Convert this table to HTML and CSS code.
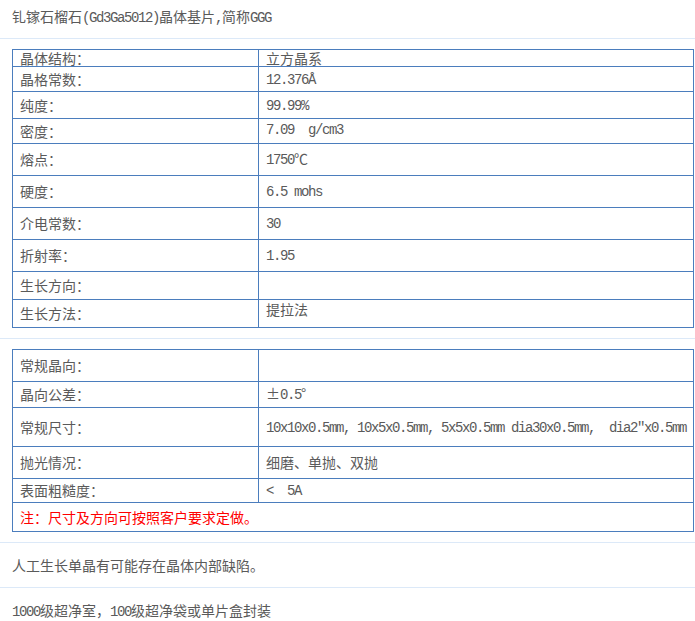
FILE: index.html
```html
<!DOCTYPE html>
<html lang="zh-CN">
<head>
<meta charset="utf-8">
<title>钆镓石榴石晶体基片</title>
<link rel="stylesheet" href="styles.css">
</head>
<body>
<div class="block title">钆镓石榴石<span class="en">(Gd3Ga5012)</span>晶体基片<span class="en">,</span>简称<span class="en">GGG</span></div>

<div class="block table-wrap">
  <table class="spec">
    <tr class="h17"><td class="k">晶体结构：</td><td class="v">立方晶系</td></tr>
    <tr class="h25"><td class="k">晶格常数：</td><td class="v"><span class="en">12.376Å</span></td></tr>
    <tr class="h27"><td class="k">纯度：</td><td class="v"><span class="en">99.99%</span></td></tr>
    <tr class="h25"><td class="k">密度：</td><td class="v top"><span class="en">7.09  g/cm3</span></td></tr>
    <tr class="h32"><td class="k">熔点：</td><td class="v"><span class="en">1750</span>℃</td></tr>
    <tr class="h32"><td class="k">硬度：</td><td class="v"><span class="en">6.5 mohs</span></td></tr>
    <tr class="h32"><td class="k">介电常数：</td><td class="v"><span class="en">30</span></td></tr>
    <tr class="h32"><td class="k">折射率：</td><td class="v"><span class="en">1.95</span></td></tr>
    <tr class="h28"><td class="k">生长方向：</td><td class="v"></td></tr>
    <tr class="h28"><td class="k">生长方法：</td><td class="v top">提拉法</td></tr>
  </table>
</div>

<div class="block table-wrap">
  <table class="spec">
    <tr class="h32"><td class="k">常规晶向：</td><td class="v"></td></tr>
    <tr class="h26"><td class="k">晶向公差：</td><td class="v">±<span class="en">0.5</span>°</td></tr>
    <tr class="h39"><td class="k">常规尺寸：</td><td class="v"><span class="en">10x10x0.5mm, 10x5x0.5mm, 5x5x0.5mm dia30x0.5mm,  dia2″x0.5mm</span></td></tr>
    <tr class="h32"><td class="k">抛光情况：</td><td class="v">细磨、单抛、双抛</td></tr>
    <tr class="h24"><td class="k">表面粗糙度：</td><td class="v"><span class="en">&lt;  5A</span></td></tr>
    <tr class="h29"><td class="note" colspan="2">注：尺寸及方向可按照客户要求定做。</td></tr>
  </table>
</div>

<div class="block line">人工生长单晶有可能存在晶体内部缺陷。</div>
<div class="block line last"><span class="en">1000</span>级超净室，<span class="en">100</span>级超净袋或单片盒封装</div>
</body>
</html>
```

FILE: styles.css
```css
html, body {
  margin: 0;
  padding: 0;
  background: #ffffff;
}

body {
  font-family: "Noto Sans CJK SC", "Noto Sans", sans-serif;
  font-size: 14px;
  line-height: 20px;
  color: #5a5a5a;
}

.en {
  font-family: "Liberation Mono", "Noto Sans CJK SC", monospace;
  letter-spacing: -1.4px;
  white-space: pre;
}

.block {
  border-bottom: 1px solid #dce9f8;
}

.title {
  height: 20px;
  padding: 6px 12px 12px;
}

.table-wrap {
  padding: 10px 1px 10px 12px;
}

.spec {
  width: 682px;
  border-collapse: collapse;
  table-layout: fixed;
}

.spec td {
  border: 1px solid #4b7dbd;
  padding: 0 7px;
  line-height: 15px;
  vertical-align: middle;
  white-space: nowrap;
}

.spec td.k {
  width: 231px;
}

.spec td.top {
  vertical-align: top;
  padding-top: 2px;
}

.spec td.note {
  color: #ff0000;
}

.h17 { height: 17px; }
.h24 { height: 24px; }
.h25 { height: 25px; }
.h26 { height: 26px; }
.h27 { height: 27px; }
.h28 { height: 28px; }
.h29 { height: 29px; }
.h32 { height: 32px; }
.h39 { height: 39px; }

.line {
  padding: 0 12px;
  height: 44px;
  line-height: 44px;
}

.line.last {
  border-bottom: none;
}
```
